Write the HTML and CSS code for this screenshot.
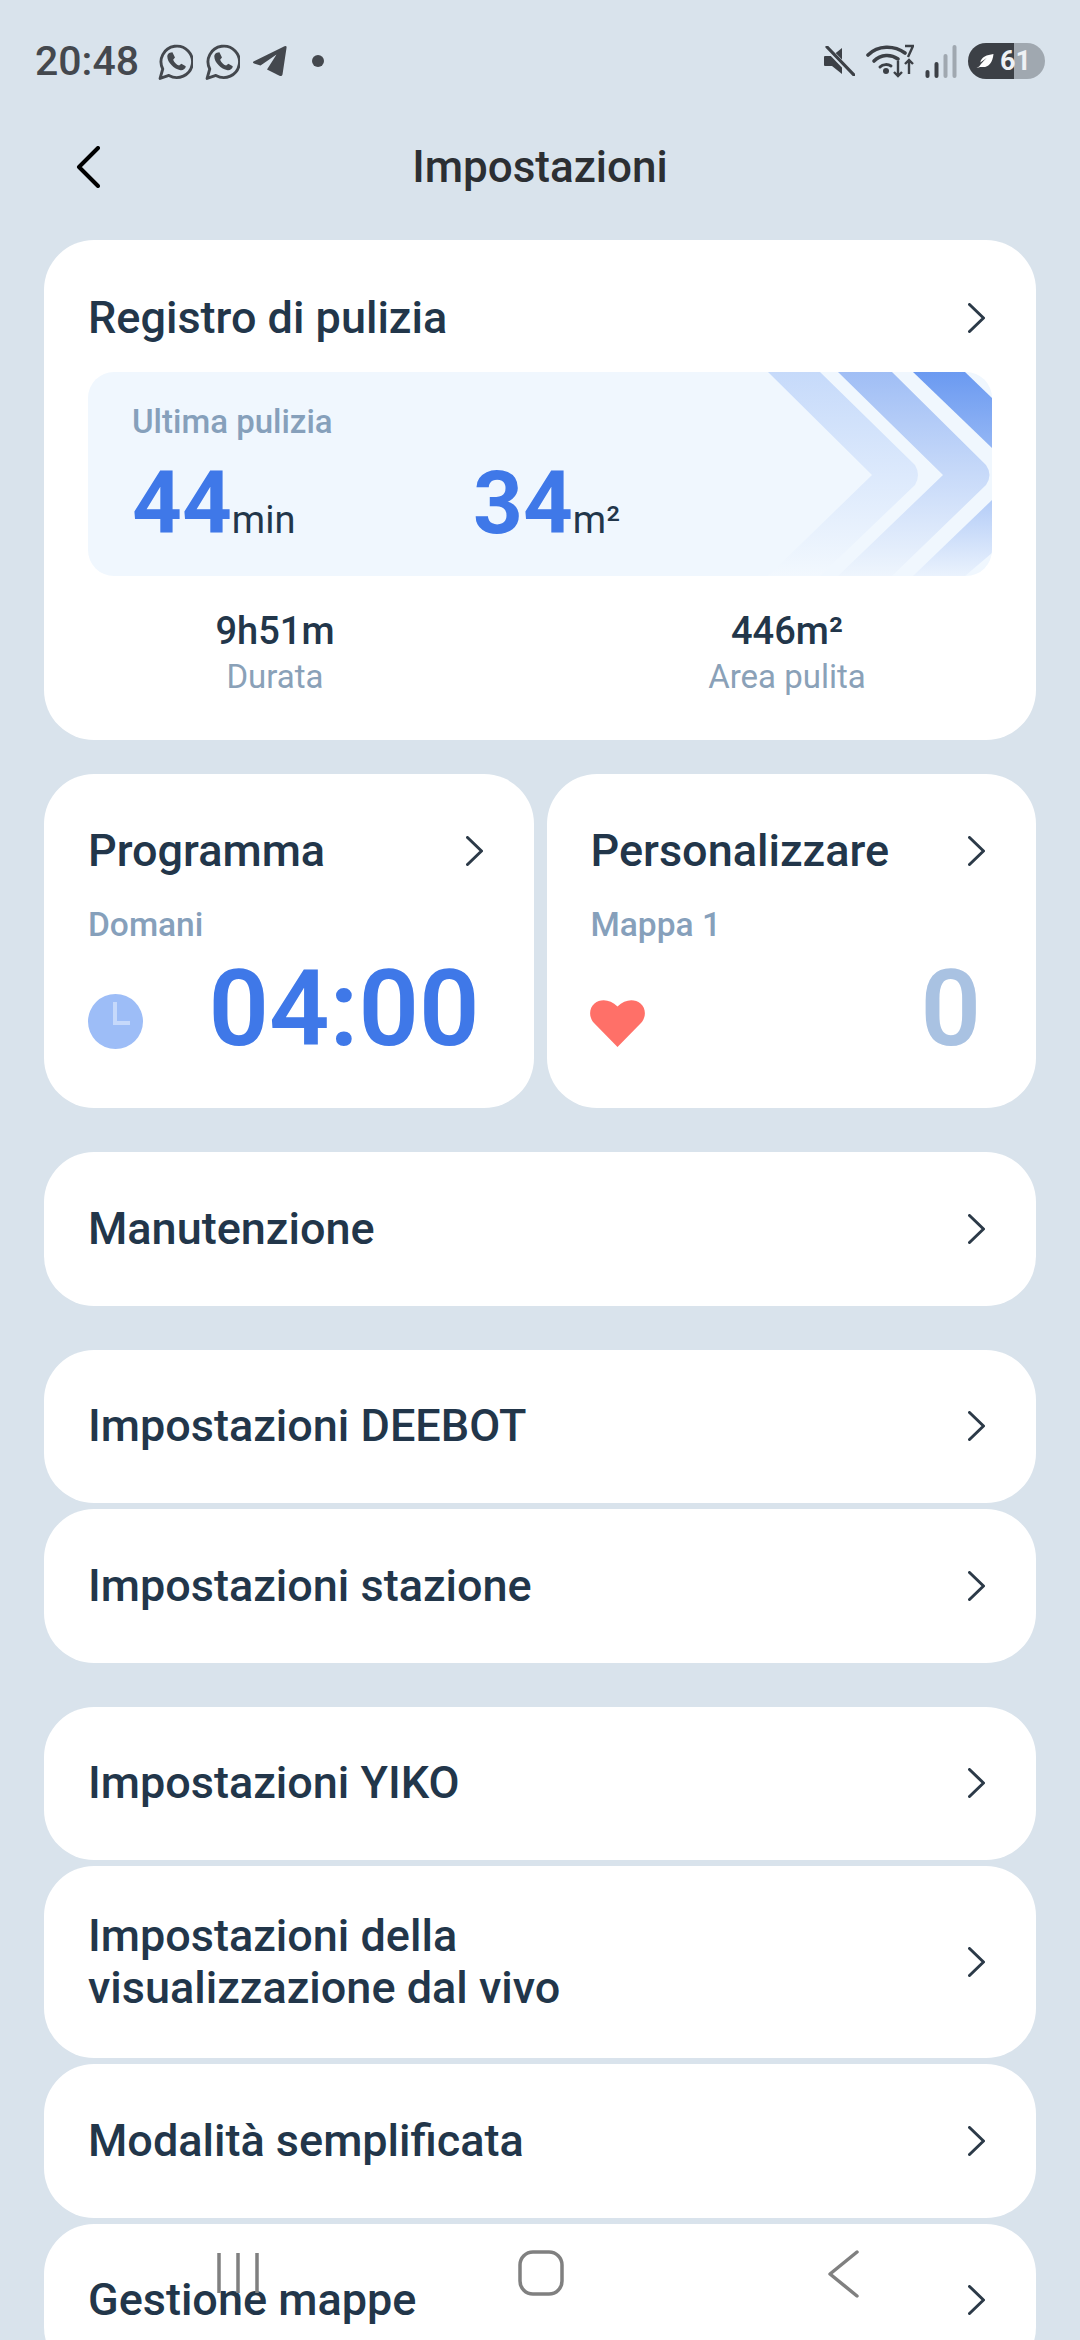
FILE: index.html
```html
<!DOCTYPE html>
<html lang="it">
<head>
<meta charset="utf-8">
<title>Impostazioni</title>
<link rel="stylesheet" href="styles.css">
</head>
<body>
<div class="screen">
  <div class="status">
    <div class="status-left">
      <span class="time">20:48</span>
      <svg class="wa" viewBox="0 0 34 36"><path d="M2 34.500l2.600-9.200A15.300 15.300 0 1 1 10.600 31.600Z" fill="none" stroke="#44484e" stroke-width="2.800" stroke-linejoin="round"/><path d="M11.500 9.500l2.500-.5 2.500 5-1.800 2.200c1.200 2.800 3 4.600 5.800 5.800l2.200-1.800 4.300 2.500c-.2 2.500-2.500 4-5 3.800C15.500 25.500 9 19 9 13c0-1.500 1-3 2.500-3.500Z" fill="#44484e"/></svg>
      <svg class="wa" viewBox="0 0 34 36"><path d="M2 34.500l2.600-9.200A15.300 15.300 0 1 1 10.600 31.600Z" fill="none" stroke="#44484e" stroke-width="2.800" stroke-linejoin="round"/><path d="M11.500 9.500l2.500-.5 2.500 5-1.800 2.200c1.200 2.800 3 4.600 5.800 5.800l2.200-1.800 4.300 2.500c-.2 2.500-2.500 4-5 3.800C15.500 25.500 9 19 9 13c0-1.500 1-3 2.500-3.500Z" fill="#44484e"/></svg>
      <svg class="tg" viewBox="0 0 34 32"><path d="M1 16.500 32 1.200Q34.500 .2 34 3L30 29.500Q29.500 31.800 27 30.800L14.500 24.500 24 9.500 8 20.500 1.500 18.500Q-.500 17.500 1 16.500Z" fill="#44484e"/></svg>
      <span class="dot"></span>
    </div>
    <div class="status-right">
      <svg class="mute" viewBox="0 0 31 30"><path d="M1 10h7l10-8v26l-10-8H1Q0 20 0 19v-8q0-1 1-1Z" fill="#3c4046"/><path d="M2 1 29 29" stroke="#d9e3ec" stroke-width="5.500"/><path d="M3 1 30 29" stroke="#3c4046" stroke-width="3.200" stroke-linecap="round"/></svg>
      <svg class="wifi" viewBox="0 0 48 34"><g fill="none" stroke="#3c4046" stroke-width="3.600" stroke-linecap="round"><path d="M2 11C12 1 28 1 39 9"/><path d="M8 17C15 10 25 10 32 15"/></g><path d="M14 23c3-3 8-3 11-1" fill="none" stroke="#3c4046" stroke-width="3" stroke-linecap="round"/><circle cx="20" cy="27" r="3" fill="#3c4046"/><g fill="none" stroke="#3c4046" stroke-width="2.400"><path d="M32 17v15M28 28l4 4 4-4"/><path d="M43 30V16M39 20l4-4 4 4"/><path d="M39 2h8l-5 11"/></g></svg>
      <svg class="signal" viewBox="0 0 31 33"><rect x="0" y="25" width="4" height="8" rx="2" fill="#3c4046"/><rect x="9" y="17" width="4" height="16" rx="2" fill="#3c4046"/><rect x="18" y="9" width="4" height="24" rx="2" fill="#a0a8b0"/><rect x="27" y="0" width="4" height="33" rx="2" fill="#a0a8b0"/></svg>
      <div class="battery">
        <svg class="leaf" viewBox="0 0 19 17"><path d="M0 16c3-1 5-1 7-1 6 0 10-5 11-14C11 2 5 4 4 10l7-5c-3 3-6 6-8 9-1 1-2 1-3 2Z" fill="#fff"/></svg>
        <span class="battery-num">61</span>
      </div>
    </div>
  </div>

  <header class="topbar">
    <svg class="back" viewBox="0 0 24 42"><path d="M22 2 3 21l19 19" fill="none" stroke="#000" stroke-width="4" stroke-linecap="round" stroke-linejoin="round"/></svg>
    <h1 class="page-title">Impostazioni</h1>
  </header>

  <main class="content">
    <section class="card log">
      <div class="head">
        <span class="row-title">Registro di pulizia</span>
        <svg class="chev" viewBox="0 0 17 30"><path d="M1.500 1.500 15.500 15l-14 13.500" fill="none" stroke="#2c3a48" stroke-width="3" stroke-linecap="round" stroke-linejoin="round"/></svg>
      </div>
      <div class="panel">
        <svg class="panel-art" viewBox="0 0 904 204" preserveAspectRatio="none">
          <defs>
            <linearGradient id="g1" gradientUnits="userSpaceOnUse" x1="0" y1="0" x2="0" y2="204"><stop offset="0" stop-color="#c6dafa"/><stop offset="1" stop-color="#f2f8fe"/></linearGradient>
            <linearGradient id="g2" gradientUnits="userSpaceOnUse" x1="0" y1="0" x2="0" y2="204"><stop offset="0" stop-color="#a0bef5"/><stop offset="1" stop-color="#eef5fd"/></linearGradient>
            <linearGradient id="g3" gradientUnits="userSpaceOnUse" x1="0" y1="0" x2="0" y2="204"><stop offset="0" stop-color="#6b9af1"/><stop offset=".55" stop-color="#a8c4f6"/><stop offset="1" stop-color="#eaf2fd"/></linearGradient>
          </defs>
          <path d="M680 0H732L827 93Q833 103 827 113L732 204H680L784 103Z" fill="url(#g1)"/>
          <path d="M750 0H804L898 93Q905 103 898 113L804 204H750L855 103Z" fill="url(#g2)"/>
          <path d="M825 0H877L904 26V76Z" fill="url(#g3)"/>
          <path d="M825 204 904 128V181L877 204Z" fill="url(#g3)"/>
        </svg>
        <div class="panel-label">Ultima pulizia</div>
        <div class="panel-values">
          <div class="value"><span class="big">44</span><span class="unit">min</span></div>
          <div class="value"><span class="big">34</span><span class="unit">m²</span></div>
        </div>
      </div>
      <div class="stats">
        <div class="stat"><div class="stat-num">9h51m</div><div class="stat-label">Durata</div></div>
        <div class="stat"><div class="stat-num">446m²</div><div class="stat-label">Area pulita</div></div>
      </div>
    </section>

    <div class="duo">
      <section class="card mini">
        <div class="head">
          <span class="row-title">Programma</span>
          <svg class="chev" viewBox="0 0 17 30"><path d="M1.500 1.500 15.500 15l-14 13.500" fill="none" stroke="#2c3a48" stroke-width="3" stroke-linecap="round" stroke-linejoin="round"/></svg>
        </div>
        <div class="sub">Domani</div>
        <div class="mini-bottom">
          <svg class="clock" viewBox="0 0 55 55"><circle cx="27.500" cy="27.500" r="27.500" fill="#9dbdf7"/><path d="M27 8v21h15" fill="none" stroke="#c6d9fb" stroke-width="4"/></svg>
          <span class="time-big">04:00</span>
        </div>
      </section>
      <section class="card mini">
        <div class="head">
          <span class="row-title">Personalizzare</span>
          <svg class="chev" viewBox="0 0 17 30"><path d="M1.500 1.500 15.500 15l-14 13.500" fill="none" stroke="#2c3a48" stroke-width="3" stroke-linecap="round" stroke-linejoin="round"/></svg>
        </div>
        <div class="sub">Mappa 1</div>
        <div class="mini-bottom">
          <svg class="heart" viewBox="0 0 55 47"><path d="M27.500 47 4 23C-1.500 17-1 8 4.500 3.500 10.500-1.500 20-1 27.500 6.500 35-1 44.500-1.500 50.500 3.500 56 8 56.500 17 51 23Z" fill="#ff7068"/></svg>
          <span class="count">0</span>
        </div>
      </section>
    </div>

    <div class="group">
      <a class="card row"><span class="row-title">Manutenzione</span><svg class="chev" viewBox="0 0 17 30"><path d="M1.500 1.500 15.500 15l-14 13.500" fill="none" stroke="#2c3a48" stroke-width="3" stroke-linecap="round" stroke-linejoin="round"/></svg></a>
    </div>

    <div class="group">
      <a class="card row"><span class="row-title">Impostazioni DEEBOT</span><svg class="chev" viewBox="0 0 17 30"><path d="M1.500 1.500 15.500 15l-14 13.500" fill="none" stroke="#2c3a48" stroke-width="3" stroke-linecap="round" stroke-linejoin="round"/></svg></a>
      <a class="card row"><span class="row-title">Impostazioni stazione</span><svg class="chev" viewBox="0 0 17 30"><path d="M1.500 1.500 15.500 15l-14 13.500" fill="none" stroke="#2c3a48" stroke-width="3" stroke-linecap="round" stroke-linejoin="round"/></svg></a>
    </div>

    <div class="group">
      <a class="card row"><span class="row-title">Impostazioni YIKO</span><svg class="chev" viewBox="0 0 17 30"><path d="M1.500 1.500 15.500 15l-14 13.500" fill="none" stroke="#2c3a48" stroke-width="3" stroke-linecap="round" stroke-linejoin="round"/></svg></a>
      <a class="card row"><span class="row-title">Impostazioni della<br>visualizzazione dal vivo</span><svg class="chev" viewBox="0 0 17 30"><path d="M1.500 1.500 15.500 15l-14 13.500" fill="none" stroke="#2c3a48" stroke-width="3" stroke-linecap="round" stroke-linejoin="round"/></svg></a>
      <a class="card row"><span class="row-title">Modalità semplificata</span><svg class="chev" viewBox="0 0 17 30"><path d="M1.500 1.500 15.500 15l-14 13.500" fill="none" stroke="#2c3a48" stroke-width="3" stroke-linecap="round" stroke-linejoin="round"/></svg></a>
      <a class="card row"><span class="row-title">Gestione mappe</span><svg class="chev" viewBox="0 0 17 30"><path d="M1.500 1.500 15.500 15l-14 13.500" fill="none" stroke="#2c3a48" stroke-width="3" stroke-linecap="round" stroke-linejoin="round"/></svg></a>
    </div>
  </main>

  <svg class="navbar" viewBox="0 0 1080 60">
    <g fill="none" stroke="#808080" stroke-width="3.500">
      <path d="M219 4V44M238 4V44M257 4V44"/>
      <rect x="520" y="3" width="42" height="42" rx="13"/>
      <path d="M857 3 830 25l27 22" stroke-linecap="round" stroke-linejoin="round"/>
    </g>
  </svg>
</div>
</body>
</html>
```

FILE: styles.css
```css
* { box-sizing: border-box; }
html, body { margin: 0; padding: 0; }
body { font-family: Roboto, "Liberation Sans", sans-serif; background: #d9e3ec; }
.screen { position: relative; width: 1080px; height: 2340px; overflow: hidden; background: #d9e3ec; }

.status { display: flex; justify-content: space-between; align-items: center; height: 82px; padding: 40px 35px 0 35px; }
.status-left, .status-right { display: flex; align-items: center; }
.time { font-size: 41px; font-weight: 500; color: #44484e; width: 123px; }
.wa { width: 35px; height: 37px; margin-right: 12px; }
.tg { width: 35px; height: 32px; }
.dot { width: 12px; height: 12px; border-radius: 50%; background: #44484e; margin-left: 25px; }
.mute { width: 31px; height: 30px; margin-right: 11px; }
.wifi { width: 48px; height: 34px; margin-right: 11px; }
.signal { width: 32px; height: 33px; margin-right: 11px; }
.battery { display: flex; align-items: center; width: 77px; height: 36px; padding-left: 8px; border-radius: 18px; background: linear-gradient(90deg, #3c4046 0 60%, #a0a8b0 60% 100%); }
.leaf { width: 19px; height: 16px; }
.battery-num { font-size: 27px; font-weight: 700; color: #eef1f4; margin-left: 5px; line-height: 36px; }

.topbar { position: relative; display: flex; justify-content: center; align-items: center; height: 62px; margin-top: 54px; }
.back { position: absolute; left: 76px; top: 10px; width: 24px; height: 42px; }
.page-title { margin: 0; font-size: 44px; font-weight: 500; color: #2c2f33; }

.content { padding: 42px 44px 0; display: flex; flex-direction: column; }
.card { background: #fff; border-radius: 50px; }
.head { display: flex; justify-content: space-between; align-items: center; }
.row-title { font-size: 45px; line-height: 52px; font-weight: 500; color: #22364a; }
.chev { width: 17px; height: 30px; flex: none; }

.log { padding: 52px 44px 0; height: 500px; }
.log .head { padding-right: 7px; }
.panel { position: relative; height: 204px; margin-top: 28px; padding: 30px 44px 0; border-radius: 26px; background: #f0f7fe; overflow: hidden; }
.panel-art { position: absolute; inset: 0; width: 100%; height: 100%; }
.panel-label { position: relative; font-size: 33px; line-height: 40px; font-weight: 500; color: #86a0bb; }
.panel-values { position: relative; display: flex; margin-top: 18px; }
.value { width: 341px; display: flex; align-items: baseline; }
.big { font-size: 87px; line-height: 87px; font-weight: 700; color: #3f78e8; }
.unit { font-size: 38px; color: #22364a; }

.stats { display: flex; gap: 152px; margin: 33px 0 0 7px; }
.stat { width: 360px; text-align: center; }
.stat-num { font-size: 38px; line-height: 44px; font-weight: 500; color: #22364a; }
.stat-label { font-size: 33px; line-height: 40px; margin-top: 4px; color: #8aa1b8; }

.duo { display: flex; gap: 13px; margin-top: 34px; }
.mini { flex: 1; height: 334px; padding: 51px 51px 0 44px; }
.sub { font-size: 33.500px; line-height: 40px; font-weight: 500; color: #86a0bb; margin-top: 28px; }
.mini-bottom { display: flex; justify-content: space-between; align-items: flex-end; margin-top: 10px; }
.clock { width: 55px; height: 55px; margin-bottom: 14px; }
.heart { width: 55px; height: 47px; margin-bottom: 16px; margin-left: -1px; }
.time-big, .count { font-size: 106px; line-height: 108px; font-weight: 600; }
.time-big { color: #3f78e8; margin-right: 3px; }
.count { color: #a9c2e2; margin-right: 4px; }

.group { display: flex; flex-direction: column; gap: 6px; margin-top: 44px; }
.row { display: flex; justify-content: space-between; align-items: center; min-height: 153.500px; padding: 44px 51px 44px 44px; }

.navbar { position: absolute; left: 0; top: 2249px; width: 1080px; height: 60px; }
```
